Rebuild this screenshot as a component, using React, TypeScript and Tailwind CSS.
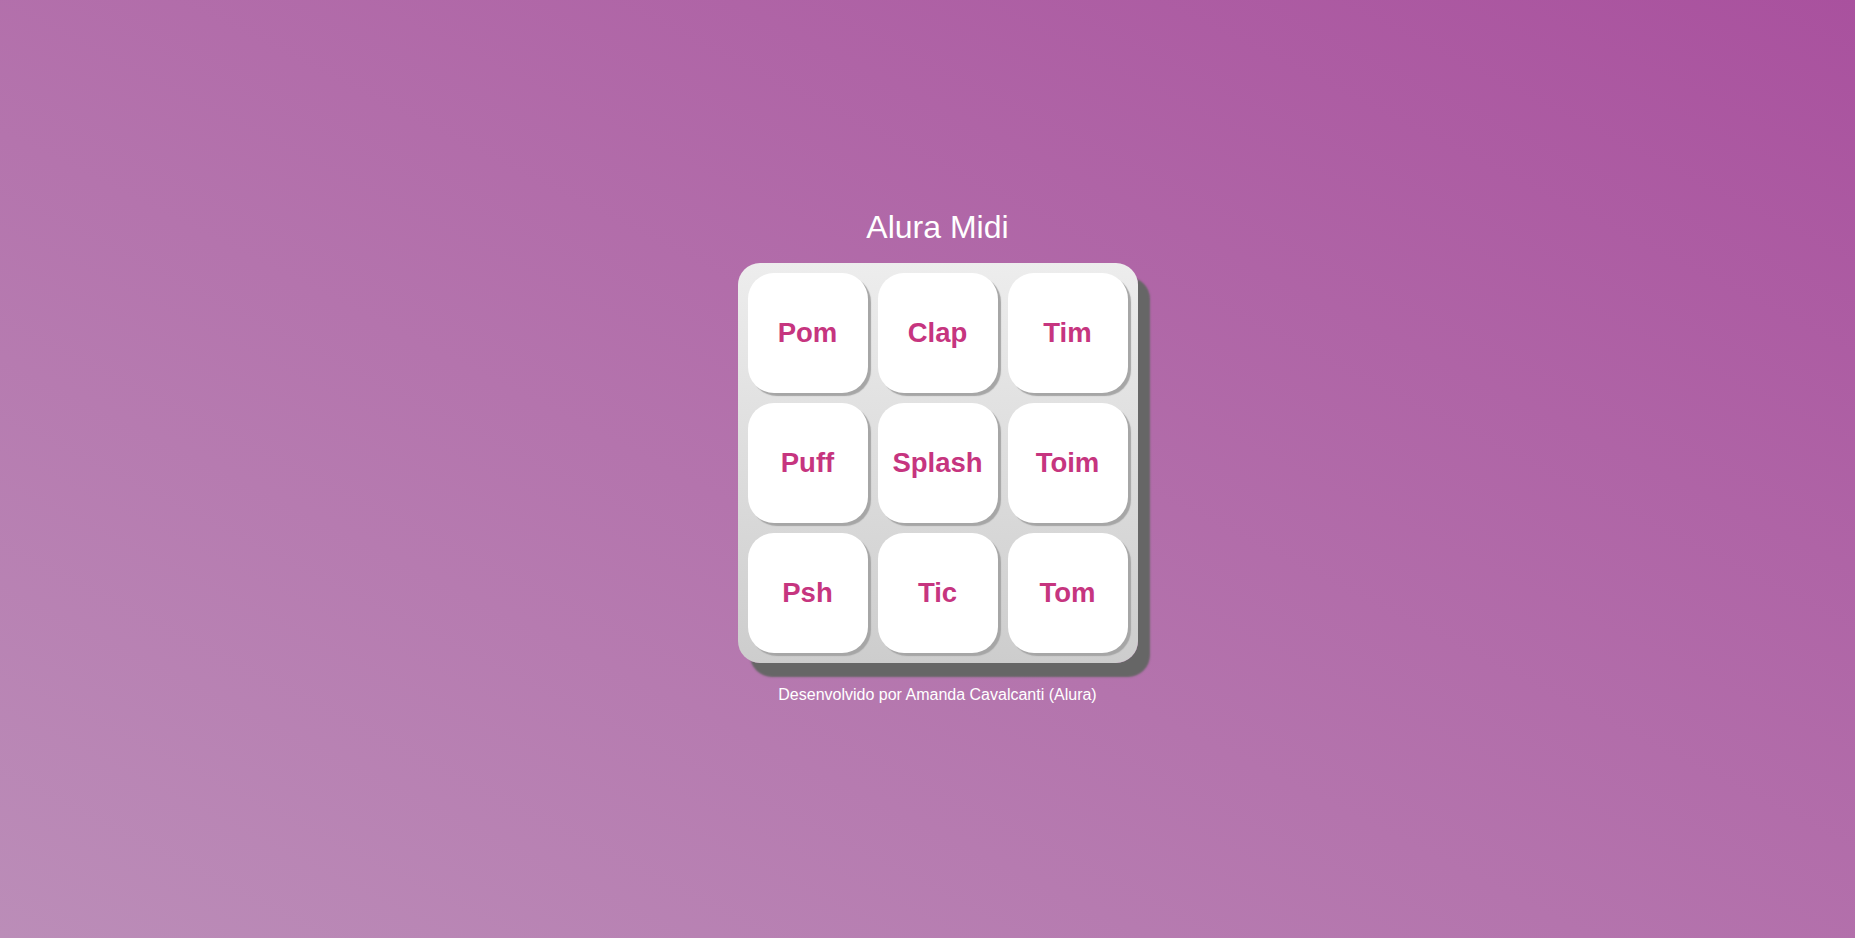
const keys = ["Pom", "Clap", "Tim", "Puff", "Splash", "Toim", "Psh", "Tic", "Tom"];

const App = () => {
  return (
    <div className="min-h-screen w-full bg-linear-to-tr from-[#bb8db8] to-[#a9519e] font-['Liberation_Sans',Arial,sans-serif]">
      <div className="flex flex-col items-center pt-[209px] pl-[20px]">
        <h1 className="text-[32px] leading-[37px] text-white">Alura Midi</h1>
        <section className="mt-[17px] grid grid-cols-3 gap-[10px] p-[10px] w-[400px] h-[400px] rounded-[22px] bg-linear-to-b from-[#ededed] to-[#cdcdcd] shadow-[12px_14px_2px_#666666]">
          {keys.map((k) => (
            <button
              key={k}
              className="w-[120px] h-[120px] rounded-[26px] bg-white shadow-[3px_3px_1px_#a6a6a6] text-[27.5px] font-bold text-[#c6357f] cursor-pointer"
            >
              {k}
            </button>
          ))}
        </section>
        <p className="mt-[23px] text-[16px] leading-[18px] text-white">
          Desenvolvido por Amanda Cavalcanti (Alura)
        </p>
      </div>
    </div>
  );
};

export default App;
